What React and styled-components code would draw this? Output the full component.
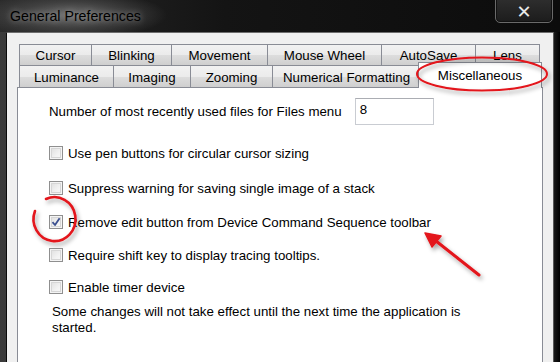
import React from 'react';
import styled, { createGlobalStyle } from 'styled-components';

const GlobalStyle = createGlobalStyle`
    html, body {
        margin: 0;
        padding: 0;
        background: #000;
    }
    body {
        font-family: 'Liberation Sans', Arial, sans-serif;
    }
`;

const Window = styled.div`
    position: relative;
    width: 560px;
    height: 362px;
    overflow: hidden;
    display: flex;
    flex-direction: column;
    background: linear-gradient(90deg, #3a3a3a 0%, #222 30%, #141414 100%);
`;

const TitleBar = styled.div`
    height: 32px;
    flex-shrink: 0;
    display: flex;
    justify-content: space-between;
    align-items: flex-start;
    background: radial-gradient(ellipse 95px 24px at 72px 15px, #6c6c6c 0%, rgba(80, 80, 80, 0.6) 55%, rgba(0, 0, 0, 0) 100%),
        linear-gradient(90deg, #2a2a2a 0%, #141414 40%, #0c0c0c 100%);
`;

const Title = styled.span`
    margin: 8px 0 0 10px;
    font-family: 'Liberation Sans', Arial, sans-serif;
    font-size: 14.2px;
    color: #000;
    text-shadow: 0 0 6px rgba(200, 200, 200, 0.7);
`;

const CloseButton = styled.div`
    width: 58px;
    height: 25px;
    margin: -2px 7px 0 0;
    border: 1px solid #6a6a6a;
    border-radius: 0 0 5px 5px;
    background: linear-gradient(180deg, #2e2e2e 0%, #1c1c1c 100%);
    box-shadow: inset 0 0 0 1px #111;
    display: flex;
    align-items: center;
    justify-content: center;
    color: #e8e8e8;
    font-size: 18px;
    font-weight: bold;
    font-family: 'DejaVu Sans', sans-serif;
    padding-top: 2px;
    box-sizing: border-box;
`;

const Frame = styled.div`
    flex: 1;
    display: flex;
    padding: 0 0 0 6px;
`;

const Client = styled.div`
    flex: 1;
    display: flex;
    flex-direction: column;
    background: #f0f0f0;
    border-left: 1px solid #0a0a0a;
    border-top: 1px solid #6e6e6e;
    padding: 11px 10px 0 10px;
`;

const RightEdge = styled.div`
    width: 6px;
    border-left: 1px solid #5a5a5a;
    background: linear-gradient(90deg, #1a1a1a, #000);
`;

const TabStrip = styled.div`
    margin: 0 3px 0 2px;
    display: flex;
    flex-direction: column;
    position: relative;
    z-index: 1;
`;

const TabRow = styled.div`
    display: flex;
    height: ${(props) => props.$h}px;
`;

const Tab = styled.div`
    box-sizing: border-box;
    width: ${(props) => props.$w}px;
    flex-shrink: 0;
    display: flex;
    align-items: center;
    justify-content: center;
    font-size: 13.3px;
    color: #000;
    border: 1px solid #898c95;
    border-bottom: none;
    border-right: ${(props) => (props.$last ? '1px solid #898c95' : 'none')};
    background: linear-gradient(180deg, #f2f2f2 0%, #ebebeb 50%, #dddddd 51%, #cfcfcf 100%);
    padding-top: 1px;
`;

const ActiveTab = styled.div`
    box-sizing: border-box;
    width: ${(props) => props.$w + 4}px;
    margin: -3px -2px -1px -2px;
    height: 26px;
    flex-shrink: 0;
    display: flex;
    align-items: center;
    justify-content: center;
    font-size: 13.3px;
    color: #000;
    background: #fff;
    border: 1px solid #898c95;
    border-bottom: none;
    position: relative;
    z-index: 2;
    padding-bottom: 1px;
`;

const Panel = styled.div`
    flex: 1;
    background: #fff;
    border: 1px solid #898c95;
    border-bottom: none;
    padding: 10px 0 0 31px;
    display: flex;
    flex-direction: column;
    font-size: 13.3px;
    color: #000;
`;

const NumberRow = styled.div`
    display: flex;
    align-items: center;
    height: 27px;
`;

const NumberInput = styled.div`
    box-sizing: border-box;
    width: 79px;
    height: 27px;
    margin-left: 13px;
    border: 1px solid #c9ccd2;
    border-top-color: #abadb3;
    padding: 3px 0 0 4px;
    font-size: 13.3px;
`;

const CheckRow = styled.div`
    display: flex;
    align-items: center;
    height: 16px;
    margin-top: ${(props) => props.$mt}px;
`;

const Box = styled.span`
    box-sizing: border-box;
    width: 14px;
    height: 14px;
    border: 1px solid #8f8f8f;
    margin-right: 5px;
    display: flex;
    align-items: center;
    justify-content: center;
    box-shadow: inset 0 0 0 1px #f4f4f4, inset 0 0 0 2px #d6d6d6;
    background: linear-gradient(135deg, #dcdcdc 0%, #f2f2f2 60%, #fafafa 100%);
`;

const Note = styled.div`
    width: 420px;
    margin: 9px 0 0 3px;
    line-height: 16px;
`;

const Overlay = styled.svg`
    position: absolute;
    left: 0;
    top: 0;
    pointer-events: none;
    z-index: 10;
`;

const Check = ({ checked, label, mt }) => (
    <CheckRow $mt={mt}>
        <Box>
            {checked && (
                <svg width="10" height="10" viewBox="0 0 10 10">
                    <path d="M1.5 5.2 L4 8 L8.6 1.2" fill="none" stroke="#3b4f8f" strokeWidth="1.8" strokeLinejoin="round" />
                </svg>
            )}
        </Box>
        <span>{label}</span>
    </CheckRow>
);

const rowOne = [
    { label: 'Cursor', w: 72 },
    { label: 'Blinking', w: 80 },
    { label: 'Movement', w: 96 },
    { label: 'Mouse Wheel', w: 114 },
    { label: 'AutoSave', w: 94 },
    { label: 'Lens', w: 65 },
];

const rowTwo = [
    { label: 'Luminance', w: 94 },
    { label: 'Imaging', w: 77 },
    { label: 'Zooming', w: 82 },
    { label: 'Numerical Formatting', w: 148 },
    { label: 'Miscellaneous', w: 120, active: true },
];

const options = [
    { label: 'Use pen buttons for circular cursor sizing', mt: 20 },
    { label: 'Suppress warning for saving single image of a stack', mt: 19 },
    { label: 'Remove edit button from Device Command Sequence toolbar', mt: 18, checked: true },
    { label: 'Require shift key to display tracing tooltips.', mt: 17 },
    { label: 'Enable timer device', mt: 16 },
];

const App = () => {
    return (
        <Window>
            <GlobalStyle />
            <TitleBar>
                <Title>General Preferences</Title>
                <CloseButton>✕</CloseButton>
            </TitleBar>
            <Frame>
                <Client>
                    <TabStrip>
                        <TabRow $h={21}>
                            {rowOne.map((t, i) => (
                                <Tab key={t.label} $w={t.w} $last={i === rowOne.length - 1}>
                                    {t.label}
                                </Tab>
                            ))}
                        </TabRow>
                        <TabRow $h={22}>
                            {rowTwo.map((t) =>
                                t.active ? (
                                    <ActiveTab key={t.label} $w={t.w}>
                                        {t.label}
                                    </ActiveTab>
                                ) : (
                                    <Tab key={t.label} $w={t.w}>
                                        {t.label}
                                    </Tab>
                                )
                            )}
                        </TabRow>
                    </TabStrip>
                    <Panel>
                        <NumberRow>
                            <span>Number of most recently used files for Files menu</span>
                            <NumberInput>8</NumberInput>
                        </NumberRow>
                        {options.map((o) => (
                            <Check key={o.label} label={o.label} mt={o.mt} checked={o.checked} />
                        ))}
                        <Note>
                            Some changes will not take effect until the next time the application is started.
                        </Note>
                    </Panel>
                </Client>
                <RightEdge />
            </Frame>
            <Overlay width="560" height="362" viewBox="0 0 560 362">
                <defs>
                    <filter id="shadow" x="-20%" y="-20%" width="140%" height="140%">
                        <feDropShadow dx="2" dy="3" stdDeviation="2" floodColor="#000" floodOpacity="0.35" />
                    </filter>
                </defs>
                <g filter="url(#shadow)" stroke="#e3141b" fill="none" strokeLinecap="round">
                    <ellipse cx="482" cy="74" rx="65" ry="16.5" strokeWidth="2" />
                    <path d="M46 199 A21 22 0 1 1 35 211" strokeWidth="2.6" />
                    <line x1="479" y1="275" x2="436" y2="241" strokeWidth="3" />
                    <path d="M425 233 L441 236 L432 247 Z" fill="#e3141b" stroke="#e3141b" strokeWidth="1.5" strokeLinejoin="round" />
                </g>
            </Overlay>
        </Window>
    );
};

export default App;
